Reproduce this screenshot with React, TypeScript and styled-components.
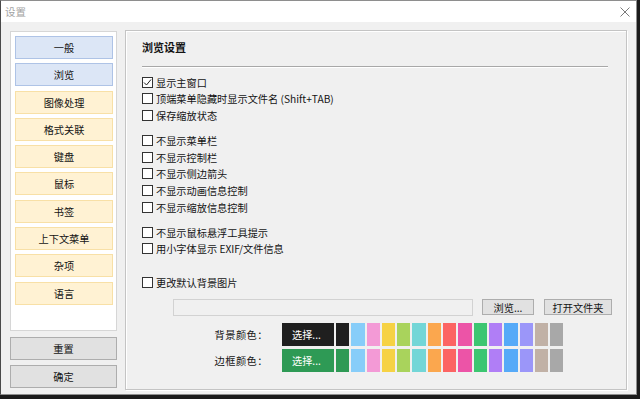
import styled, {createGlobalStyle} from "styled-components";

const GlobalStyle = createGlobalStyle`
  html, body {
    margin: 0;
    padding: 0;
    background: #1b1b1b;
  }
  body {
    font-family: "Noto Sans CJK SC", "Noto Sans", sans-serif;
  }
`

const Window = styled.div`
  width: 637px;
  height: 395px;
  box-sizing: border-box;
  background: #f0f0f0;
  border: 1px solid #8e8e8e;
  border-left-color: #4a4a4a;
  display: flex;
  flex-direction: column;
  font-size: 10.2px;
  color: #141414;
`

const TitleBar = styled.div`
  height: 21px;
  flex-shrink: 0;
  background: #ffffff;
  display: flex;
  align-items: center;
  justify-content: space-between;
  padding: 0 6px 0 4px;
`

const Title = styled.span`
  color: #a3a3a3;
  font-size: 10.5px;
`

const Body = styled.div`
  display: flex;
  gap: 8px;
  padding: 8px 0 0 9px;
`

const LeftColumn = styled.div`
  width: 107px;
  display: flex;
  flex-direction: column;
  padding-top: 1px;
`

const NavBox = styled.div`
  height: 300px;
  box-sizing: border-box;
  background: #ffffff;
  border: 1px solid #d6d6d6;
  padding: 4px 3px 0 4px;
  display: flex;
  flex-direction: column;
  gap: 4.3px;
`

const NavButton = styled.div<{ $kind: "blue" | "yellow" }>`
  height: 23px;
  box-sizing: border-box;
  display: flex;
  align-items: center;
  justify-content: center;
  background: ${p => p.$kind === "blue" ? "#dce6f6" : "#fff2d3"};
  border: 1px solid ${p => p.$kind === "blue" ? "#aec3e6" : "#f8e0a6"};
`

const FooterButtons = styled.div`
  margin-top: 6px;
  display: flex;
  flex-direction: column;
  gap: 5px;
`

const GrayButton = styled.div<{ $w?: number; $h?: number }>`
  width: ${p => p.$w ? `${p.$w}px` : "auto"};
  height: ${p => p.$h ?? 23}px;
  box-sizing: border-box;
  display: flex;
  align-items: center;
  justify-content: center;
  background: #e1e1e1;
  border: 1px solid #adadad;
  flex-shrink: 0;
`

const Panel = styled.div`
  width: 502px;
  height: 360px;
  box-sizing: border-box;
  border: 1px solid #c4c4c4;
  box-shadow: inset 1px 1px 0 #ffffff, 1px 1px 0 #ffffff;
  padding: 9px 0 0 16px;
  display: flex;
  flex-direction: column;
`

const Heading = styled.div`
  font-size: 11px;
  font-weight: bold;
  line-height: 14px;
  height: 14px;
`

const Separator = styled.div`
  margin-top: 11.5px;
  width: 466px;
  height: 1px;
  background: #a8a8a8;
  border-bottom: 1px solid #ffffff;
  margin-bottom: 6.5px;
`

const Group = styled.div<{ $gap: number }>`
  display: flex;
  flex-direction: column;
  margin-top: ${p => p.$gap}px;
`

const CheckRow = styled.label`
  height: 16.6px;
  display: flex;
  align-items: center;
  gap: 3px;
  white-space: nowrap;
`

const Box = styled.span`
  width: 11px;
  height: 11px;
  box-sizing: border-box;
  border: 1px solid #333333;
  background: #ffffff;
  display: flex;
  align-items: center;
  justify-content: center;
  flex-shrink: 0;
`

const PathRow = styled.div`
  margin-top: 8px;
  margin-left: 31px;
  height: 17px;
  display: flex;
  align-items: center;
`

const PathInput = styled.div`
  width: 300px;
  height: 17px;
  box-sizing: border-box;
  border: 1px solid #d2d2d2;
  background: #f0f0f0;
  margin-right: 9px;
`

const ColorRows = styled.div`
  margin-top: 7px;
  display: flex;
  flex-direction: column;
  gap: 3.3px;
`

const ColorRow = styled.div`
  display: flex;
  align-items: center;
  height: 23px;
`

const ColorLabel = styled.span`
  width: 126px;
  text-align: right;
  margin-right: 14px;
  letter-spacing: 0.5px;
`

const SelectButton = styled.div<{ $bg: string }>`
  width: 52px;
  height: 23px;
  box-sizing: border-box;
  background: ${p => p.$bg};
  color: #ffffff;
  display: flex;
  align-items: center;
  padding-left: 10px;
  margin-right: 2px;
`

const Swatch = styled.div<{ $c: string }>`
  width: 13.3px;
  height: 23px;
  background: ${p => p.$c};
  margin-right: 2px;
`

const navItems: { label: string; kind: "blue" | "yellow" }[] = [
  {label: "一般", kind: "blue"},
  {label: "浏览", kind: "blue"},
  {label: "图像处理", kind: "yellow"},
  {label: "格式关联", kind: "yellow"},
  {label: "键盘", kind: "yellow"},
  {label: "鼠标", kind: "yellow"},
  {label: "书签", kind: "yellow"},
  {label: "上下文菜单", kind: "yellow"},
  {label: "杂项", kind: "yellow"},
  {label: "语言", kind: "yellow"},
]

const groups: { gap: number; items: string[] }[] = [
  {gap: 0, items: ["显示主窗口", "顶端菜单隐藏时显示文件名 (Shift+TAB)", "保存缩放状态"]},
  {gap: 8.6, items: ["不显示菜单栏", "不显示控制栏", "不显示侧边箭头", "不显示动画信息控制", "不显示缩放信息控制"]},
  {gap: 8.6, items: ["不显示鼠标悬浮工具提示", "用小字体显示 EXIF/文件信息"]},
  {gap: 17.2, items: ["更改默认背景图片"]},
]

const palette = [
  "#87cdf9", "#f39ad6", "#f6d244", "#a9d35c", "#73d6d7", "#fba74e", "#fc6463",
  "#ec54a7", "#3cc671", "#b07ef6", "#56aaf8", "#9b96f9", "#c1b1a6", "#a8a8a8",
]

const CheckBox = ({checked}: { checked?: boolean }) => (
  <Box>
    {checked && (
      <svg width="9" height="9" viewBox="0 0 9 9">
        <path d="M1 4.5 L3.5 7 L8 1.5" fill="none" stroke="#222" strokeWidth="1"/>
      </svg>
    )}
  </Box>
)

export default function App() {
  return (
    <>
      <GlobalStyle/>
      <Window>
        <TitleBar>
          <Title>设置</Title>
          <svg width="10" height="10" viewBox="0 0 10 10">
            <path d="M0.5 0.5 L9.5 9.5 M9.5 0.5 L0.5 9.5" stroke="#7a7a7a" strokeWidth="1"/>
          </svg>
        </TitleBar>
        <Body>
          <LeftColumn>
            <NavBox>
              {navItems.map(item => (
                <NavButton key={item.label} $kind={item.kind}>{item.label}</NavButton>
              ))}
            </NavBox>
            <FooterButtons>
              <GrayButton>重置</GrayButton>
              <GrayButton>确定</GrayButton>
            </FooterButtons>
          </LeftColumn>
          <Panel>
            <Heading>浏览设置</Heading>
            <Separator/>
            {groups.map((g, gi) => (
              <Group key={gi} $gap={g.gap}>
                {g.items.map((text, i) => (
                  <CheckRow key={text}>
                    <CheckBox checked={gi === 0 && i === 0}/>
                    {text}
                  </CheckRow>
                ))}
              </Group>
            ))}
            <PathRow>
              <PathInput/>
              <GrayButton $w={52} $h={16}>浏览...</GrayButton>
              <div style={{width: 10}}/>
              <GrayButton $w={68} $h={16}>打开文件夹</GrayButton>
            </PathRow>
            <ColorRows>
              <ColorRow>
                <ColorLabel>背景颜色：</ColorLabel>
                <SelectButton $bg="#1f1f1f">选择...</SelectButton>
                <Swatch $c="#1f1f1f"/>
                {palette.map(c => <Swatch key={c} $c={c}/>)}
              </ColorRow>
              <ColorRow>
                <ColorLabel>边框颜色：</ColorLabel>
                <SelectButton $bg="#2e9a55">选择...</SelectButton>
                <Swatch $c="#2e9a55"/>
                {palette.map(c => <Swatch key={c} $c={c}/>)}
              </ColorRow>
            </ColorRows>
          </Panel>
        </Body>
      </Window>
    </>
  )
}
